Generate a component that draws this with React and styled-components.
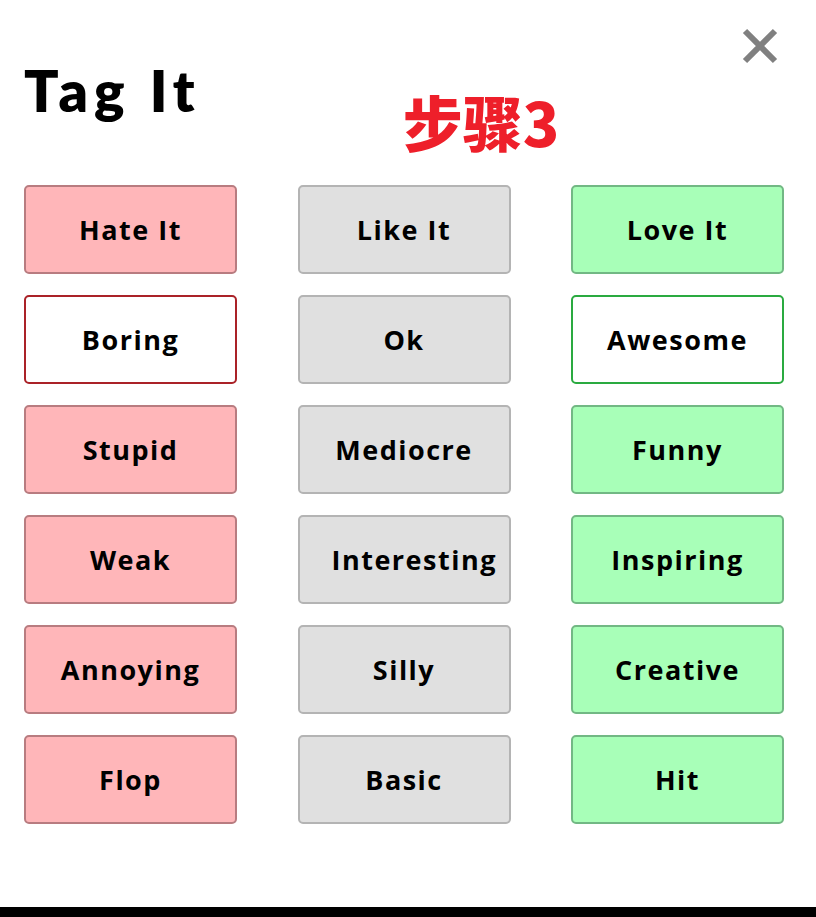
import styled, { createGlobalStyle } from 'styled-components'

const GlobalStyle = createGlobalStyle`
  html, body {
    margin: 0;
    padding: 0;
    background: #fff;
  }
  body {
    font-family: 'Open Sans', 'Noto Sans', sans-serif;
  }
`

const tones = {
  bad: { bg: '#ffb6b9', border: '#b87c80' },
  meh: { bg: '#e0e0e0', border: '#b4b4b4' },
  good: { bg: '#a8ffb8', border: '#72b884' },
  badOutline: { bg: '#ffffff', border: '#aa2228' },
  goodOutline: { bg: '#ffffff', border: '#2aaa40' },
}

const rows = [
  [['Hate It', 'bad'], ['Like It', 'meh'], ['Love It', 'good']],
  [['Boring', 'badOutline'], ['Ok', 'meh'], ['Awesome', 'goodOutline']],
  [['Stupid', 'bad'], ['Mediocre', 'meh'], ['Funny', 'good']],
  [['Weak', 'bad'], ['Interesting', 'meh'], ['Inspiring', 'good']],
  [['Annoying', 'bad'], ['Silly', 'meh'], ['Creative', 'good']],
  [['Flop', 'bad'], ['Basic', 'meh'], ['Hit', 'good']],
]

const App = () => {
  return (
    <>
      <GlobalStyle />
      <Page>
        <Header>
          <Title>Tag It</Title>
          <Step>步骤3</Step>
          <CloseButton aria-label="close">
            <svg width="36" height="36" viewBox="0 0 36 36">
              <path
                d="M3 3 L33 33 M33 3 L3 33"
                stroke="#808080"
                strokeWidth="6"
                strokeLinecap="butt"
              />
            </svg>
          </CloseButton>
        </Header>
        <Grid>
          {rows.flat().map(([label, tone]) => (
            <TagButton key={label} $tone={tone}>
              {label}
            </TagButton>
          ))}
        </Grid>
      </Page>
      <BottomBar />
    </>
  )
}

const Page = styled.div`
  position: relative;
  height: 907px;
  padding: 0 32px 0 24px;
  box-sizing: border-box;
`

const Header = styled.div`
  display: flex;
  align-items: flex-start;
  height: 185px;
`

const Title = styled.h1`
  margin: 62px 0 0;
  font-family: 'Lato', 'Open Sans', sans-serif;
  font-weight: 800;
  font-size: 57px;
  line-height: 1;
  color: #000;
  letter-spacing: 6px;
`

const Step = styled.div`
  margin: 85px 0 0 202px;
  font-family: 'Noto Sans CJK SC', 'Noto Sans', sans-serif;
  font-weight: 900;
  font-size: 60px;
  line-height: 1.2;
  color: #ee1f2a;
`

const CloseButton = styled.button`
  position: absolute;
  top: 28px;
  right: 38px;
  padding: 0;
  border: none;
  background: none;
  cursor: pointer;
  line-height: 0;
`

const Grid = styled.div`
  display: grid;
  grid-template-columns: repeat(3, 213px);
  justify-content: space-between;
  row-gap: 21px;
`

const TagButton = styled.button`
  height: 89px;
  padding: 0 32px;
  box-sizing: border-box;
  border-radius: 5px;
  border: 2px solid ${(p) => tones[p.$tone].border};
  background: ${(p) => tones[p.$tone].bg};
  font-family: 'Open Sans', sans-serif;
  font-weight: 700;
  font-size: 27px;
  letter-spacing: 1.5px;
  color: #000;
  white-space: nowrap;
  cursor: pointer;
`

const BottomBar = styled.div`
  height: 10px;
  background: #000;
`

export default App
